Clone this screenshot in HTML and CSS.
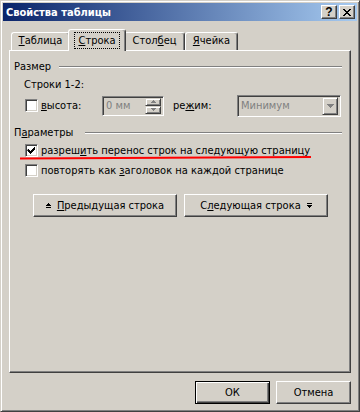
FILE: index.html
```html
<!DOCTYPE html>
<html lang="ru">
<head>
    <meta charset="UTF-8">
    <title>Свойства таблицы</title>
    <link rel="stylesheet" href="styles.css">
</head>
<body>
    <div class="dialog">
        <div class="titlebar">
            <span class="title">Свойства таблицы</span>
            <span class="tb-btn help">?</span>
            <span class="tb-btn close">
                <svg width="8" height="7" viewBox="0 0 8 7"><path d="M0 0h2v1h-2zM6 0h2v1h-2zM1 1h2v1h-2zM5 1h2v1h-2zM2 2h4v1h-4zM3 3h2v1h-2zM2 4h4v1h-4zM1 5h2v1h-2zM5 5h2v1h-2zM0 6h2v1h-2zM6 6h2v1h-2z" fill="#000"/></svg>
            </span>
        </div>

        <div class="content">
            <div class="tabs">
                <div class="tab tab-table"><u>Т</u>аблица</div>
                <div class="tab tab-row active"><span class="focus"><u>С</u>трока</span></div>
                <div class="tab tab-col">Стол<u>б</u>ец</div>
                <div class="tab tab-cell"><u>Я</u>чейка</div>
            </div>

            <div class="panel">
                <div class="group-title">
                    <span>Размер</span>
                    <span class="etch"></span>
                </div>
                <div class="indent-label">Строки 1-2:</div>
                <div class="field-row">
                    <span class="checkbox"></span>
                    <span class="field-label"><u>в</u>ысота:</span>
                    <div class="spin">
                        <span class="disabled-text">0 мм</span>
                        <div class="spin-btns">
                            <span class="spin-btn">
                                <svg width="5" height="3" viewBox="0 0 5 3"><path d="M2 0h1v1h1v1h1v1h-5v-1h1v-1h1z" fill="#808080"/></svg>
                            </span>
                            <span class="spin-btn">
                                <svg width="5" height="3" viewBox="0 0 5 3"><path d="M0 0h5v1h-1v1h-1v1h-1v-1h-1v-1h-1z" fill="#808080"/></svg>
                            </span>
                        </div>
                    </div>
                    <span class="field-label mode">ре<u>ж</u>им:</span>
                    <div class="combo">
                        <span class="disabled-text">Минимум</span>
                        <span class="combo-btn">
                            <svg width="7" height="4" viewBox="0 0 7 4"><path d="M0 0h7v1h-1v1h-1v1h-1v1h-1v-1h-1v-1h-1v-1h-1z" fill="#808080"/></svg>
                        </span>
                    </div>
                </div>

                <div class="group-title params">
                    <span>П<u>а</u>раметры</span>
                    <span class="etch"></span>
                </div>
                <div class="check-row first">
                    <span class="checkbox">
                        <svg width="9" height="9" viewBox="0 0 9 9"><path d="M1 3h1v1h1v1h1v-1h1v-1h1v-1h1v-1h1v3h-1v1h-1v1h-1v1h-1v1h-1v-1h-1v-1h-1v-1h-1z" fill="#000"/></svg>
                    </span>
                    <span class="check-label">разреш<u>и</u>ть перенос строк на следующую страницу</span>
                </div>
                <div class="check-row">
                    <span class="checkbox"></span>
                    <span class="check-label">повторять как <u>з</u>аголовок на каждой странице</span>
                </div>

                <div class="nav-row">
                    <button class="btn nav-btn">
                        <svg width="5" height="6" viewBox="0 0 5 6"><path d="M2 0h1v1h1v1h1v1h-5v-1h1v-1h1zM0 4h5v1h-5z" fill="#000"/></svg>
                        <span><u>П</u>редыдущая строка</span>
                    </button>
                    <button class="btn nav-btn">
                        <span>С<u>л</u>едующая строка</span>
                        <svg width="5" height="6" viewBox="0 0 5 6"><path d="M0 0h5v1h-5zM0 2h5v1h-1v1h-1v1h-1v-1h-1v-1h-1z" fill="#000"/></svg>
                    </button>
                </div>
            </div>

            <div class="actions">
                <button class="btn default">ОК</button>
                <button class="btn">Отмена</button>
            </div>
        </div>

        <svg class="mark" width="360" height="412" viewBox="0 0 360 412">
            <path d="M20 158.5 L311 157" stroke="#ff0000" stroke-width="2" fill="none"/>
        </svg>
    </div>
</body>
</html>
```

FILE: styles.css
```css
*, :after, :before {
    margin: 0;
    padding: 0;
    box-sizing: border-box;
}

body {
    background: #d4d0c8;
    color: #000;
    font-family: "DejaVu Sans Condensed", "Liberation Sans", sans-serif;
    font-size: 11px;
}

u {
    text-decoration: underline;
    text-underline-offset: 1px;
}

.dialog {
    position: relative;
    width: 360px;
    height: 412px;
    background: #d4d0c8;
    border: 1px solid;
    border-color: #d4d0c8 #404040 #404040 #d4d0c8;
    box-shadow: inset 1px 1px #fff, inset -1px -1px #808080;
    padding: 2px;
    display: flex;
    flex-direction: column;
}

/* title bar */
.titlebar {
    height: 18px;
    display: flex;
    align-items: center;
    gap: 2px;
    padding: 0 2px 0 3px;
    background: linear-gradient(to right, #0a246a, #a6caf0);
}

.title {
    color: #fff;
    font-weight: bold;
    font-size: 11px;
    margin-right: auto;
}

.tb-btn {
    width: 16px;
    height: 14px;
    display: flex;
    align-items: center;
    justify-content: center;
    background: #d4d0c8;
    border: 1px solid;
    border-color: #fff #404040 #404040 #fff;
    box-shadow: inset -1px -1px #808080;
    font-family: "Liberation Sans", sans-serif;
    font-weight: bold;
    font-size: 12px;
    line-height: 12px;
}

/* body */
.content {
    flex: 1;
    padding: 8px 6px 0 6px;
}

.tabs {
    height: 21px;
    display: flex;
    align-items: flex-end;
    padding-left: 2px;
    position: relative;
    z-index: 1;
}

.tab {
    height: 18px;
    line-height: 16px;
    text-align: center;
    background: #d4d0c8;
    border-top: 1px solid #fff;
    border-left: 1px solid #fff;
    border-right: 1px solid #404040;
    border-radius: 3px 3px 0 0;
    box-shadow: inset -1px 0 #808080;
}

.tab-table { width: 59px; }
.tab-row { width: 58px; }
.tab-col { width: 61px; }
.tab-cell { width: 53px; }

.tab.active {
    height: 22px;
    margin: 0 -2px -1px;
    padding-top: 3px;
    line-height: 14px;
    position: relative;
    z-index: 2;
}

.focus {
    display: inline-block;
    outline: 1px dotted #000;
    padding: 0 3px;
    line-height: 15px;
}

.panel {
    height: 323px;
    border: 1px solid;
    border-color: #fff #404040 #404040 #fff;
    box-shadow: inset -1px -1px #808080;
    padding: 9px 8px 0 4px;
}

.group-title {
    height: 13px;
    line-height: 13px;
    display: flex;
    align-items: center;
    gap: 8px;
}

.group-title.params {
    margin-top: 10px;
    gap: 12px;
}

.etch {
    flex: 1;
    height: 2px;
    border-top: 1px solid #808080;
    border-bottom: 1px solid #fff;
}

.indent-label {
    margin: 5px 0 0 10px;
    height: 13px;
    line-height: 13px;
}

.field-row {
    margin-top: 4px;
    height: 21px;
    display: flex;
    align-items: center;
    padding-left: 11px;
}

.checkbox {
    width: 13px;
    height: 13px;
    flex: none;
    display: flex;
    align-items: center;
    justify-content: center;
    background: #fff;
    border: 1px solid;
    border-color: #808080 #fff #fff #808080;
    box-shadow: inset 1px 1px #404040, inset -1px -1px #d4d0c8;
}

.field-label {
    width: 61px;
    margin-left: 3px;
}

.field-label.mode {
    width: 64px;
    margin-left: 9px;
}

.disabled-text {
    color: #808080;
}

.spin,
.combo {
    display: flex;
    align-items: center;
    background: #d4d0c8;
    border: 1px solid;
    border-color: #808080 #fff #fff #808080;
    box-shadow: inset 1px 1px #404040, inset -1px -1px #d4d0c8;
    padding: 2px 2px 2px 3px;
}

.spin {
    width: 62px;
    height: 20px;
}

.combo {
    width: 104px;
    height: 22px;
}

.spin .disabled-text,
.combo .disabled-text {
    flex: 1;
}

.spin-btns {
    width: 16px;
    height: 16px;
    display: flex;
    flex-direction: column;
}

.spin-btn,
.combo-btn {
    flex: 1;
    display: flex;
    align-items: center;
    justify-content: center;
    background: #d4d0c8;
    border: 1px solid;
    border-color: #d4d0c8 #404040 #404040 #d4d0c8;
    box-shadow: inset 1px 1px #fff, inset -1px -1px #808080;
}

.combo-btn {
    flex: none;
    width: 16px;
    height: 18px;
}

.check-row {
    margin: 7px 0 0 11px;
    height: 13px;
    display: flex;
    align-items: center;
}

.check-row.first {
    margin-top: 5px;
}

.check-label {
    margin-left: 3px;
    white-space: nowrap;
}

.btn {
    font: inherit;
    color: #000;
    height: 23px;
    background: #d4d0c8;
    border: 1px solid;
    border-color: #fff #404040 #404040 #fff;
    box-shadow: inset -1px -1px #808080;
}

.nav-row {
    margin: 17px 0 0 19px;
    display: flex;
    gap: 7px;
}

.nav-btn {
    width: 144px;
    display: flex;
    align-items: center;
    justify-content: center;
    gap: 6px;
}

.actions {
    margin-top: 8px;
    display: flex;
    justify-content: flex-end;
    gap: 6px;
}

.actions .btn {
    width: 75px;
}

.btn.default {
    border: 1px solid #000;
    box-shadow: inset 1px 1px #fff, inset -1px -1px #404040, inset -2px -2px #808080;
}

/* red hand-drawn mark over the first option */
.mark {
    position: absolute;
    top: -1px;
    left: -1px;
    pointer-events: none;
}
```
